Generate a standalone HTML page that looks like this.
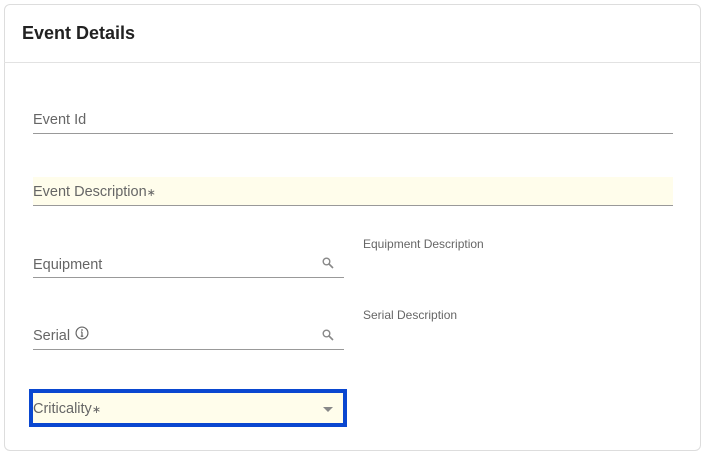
<!DOCTYPE html>
<html><head><style>
body{margin:0;width:703px;height:453px;background:#fff;font-family:"Liberation Sans",sans-serif;position:relative;overflow:hidden}
.card{position:absolute;left:4px;top:4px;width:697px;height:447px;border:1px solid #ddd;border-radius:6px;box-sizing:border-box}
.hdr{position:absolute;left:4px;top:62px;width:697px;height:1px;background:#e2e2e2}
.t{position:absolute;left:22px;top:23px;font-size:18px;font-weight:bold;color:#222}
.lbl{position:absolute;font-size:14.5px;color:#666}
.ul{position:absolute;height:1px;background:#999}
.sm{position:absolute;font-size:12px;color:#666}
.yel{position:absolute;background:#fffdeb}
</style></head><body>
<div class="card"></div>
<div class="hdr"></div>
<div class="t">Event Details</div>

<div class="lbl" style="left:33px;top:112px">Event Id</div>
<div class="ul" style="left:33px;top:133px;width:640px"></div>

<div class="yel" style="left:33px;top:177px;width:640px;height:28px"></div>
<div class="lbl" style="left:33px;top:184px">Event Description<span style="font-size:11px">∗</span></div>
<div class="ul" style="left:33px;top:205px;width:640px"></div>

<div class="lbl" style="left:33px;top:257px">Equipment</div>
<svg style="position:absolute;left:322px;top:257px" width="12" height="12" viewBox="0 0 12 12"><circle cx="4.5" cy="4.5" r="3.3" fill="none" stroke="#888" stroke-width="1.4"/><path d="M7 7l4 4" stroke="#888" stroke-width="1.6"/></svg>
<div class="ul" style="left:33px;top:277px;width:311px"></div>
<div class="sm" style="left:363px;top:237px">Equipment Description</div>

<div class="lbl" style="left:33px;top:328px">Serial</div>
<svg style="position:absolute;left:75px;top:326px" width="14" height="14" viewBox="0 0 13 13"><circle cx="6.5" cy="6.5" r="5.5" fill="none" stroke="#666" stroke-width="1.1"/><path d="M6.5 5.5v4M5.3 9.5h2.4M5.5 5.5h1" stroke="#666" stroke-width="1.1"/><circle cx="6.5" cy="3.7" r=".8" fill="#666"/></svg>
<svg style="position:absolute;left:322px;top:329px" width="12" height="12" viewBox="0 0 12 12"><circle cx="4.5" cy="4.5" r="3.3" fill="none" stroke="#888" stroke-width="1.4"/><path d="M7 7l4 4" stroke="#888" stroke-width="1.6"/></svg>
<div class="ul" style="left:33px;top:349px;width:311px"></div>
<div class="sm" style="left:363px;top:308px">Serial Description</div>

<div style="position:absolute;left:29px;top:389px;width:318px;height:38px;box-sizing:border-box;border:4px solid #0a47d0;background:#fffdeb"></div>
<div class="lbl" style="left:33px;top:401px">Criticality<span style="font-size:11px">∗</span></div>
<svg style="position:absolute;left:323px;top:407px" width="10" height="6"><path d="M0 0h10L5 5z" fill="#888"/></svg>
</body></html>
